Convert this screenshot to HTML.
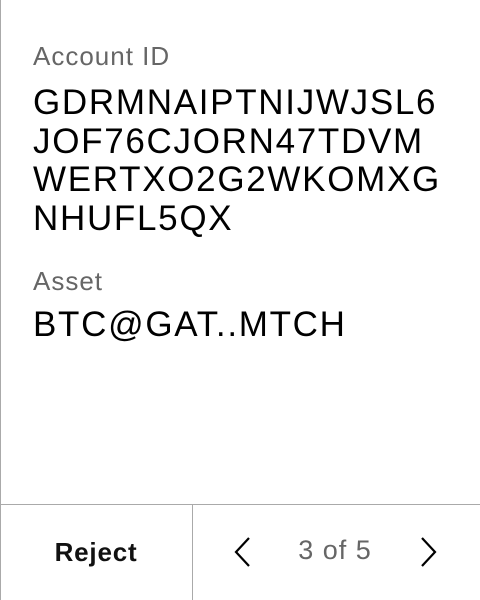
<!DOCTYPE html>
<html><head><style>
body{margin:0;width:480px;height:600px;background:#fff;font-family:"Liberation Sans",sans-serif;position:relative;overflow:hidden}
.lb{position:absolute;left:0;top:0;width:1px;height:600px;background:#aaa}
.lab{position:absolute;left:33px;font-size:26px;letter-spacing:1px;color:#666;line-height:28px}
.val{position:absolute;left:33px;font-size:35px;letter-spacing:1.7px;color:#000;line-height:38.5px;width:447px;white-space:nowrap}
.hl{position:absolute;left:0;top:504px;width:480px;height:1px;background:#aaa}
.vl{position:absolute;left:192px;top:504px;width:1px;height:96px;background:#aaa}
</style></head><body>
<div class="lb"></div>
<div class="lab" style="top:42px">Account ID</div>
<div class="val" style="top:84px">GDRMNAIPTNIJWJSL6<br>JOF76CJORN47TDVM<br>WERTXO2G2WKOMXG<br>NHUFL5QX</div>
<div class="lab" style="top:267px">Asset</div>
<div class="val" style="top:306px">BTC@GAT..MTCH</div>
<div class="hl"></div><div class="vl"></div>
<div style="position:absolute;left:0;top:505px;width:192px;height:95px;display:flex;align-items:center;justify-content:center;font-size:26px;letter-spacing:0.8px;font-weight:bold;color:#111">Reject</div>
<svg style="position:absolute;left:230px;top:535px" width="24" height="34"><path d="M19 3 L6 17 L19 31" fill="none" stroke="#000" stroke-width="2.2"/></svg>
<div style="position:absolute;left:285px;top:535px;width:100px;text-align:center;font-size:27px;letter-spacing:1px;color:#666;line-height:30px">3 of 5</div>
<svg style="position:absolute;left:418px;top:535px" width="24" height="34"><path d="M4 3 L17 17 L4 31" fill="none" stroke="#000" stroke-width="2.2"/></svg>
</body></html>
